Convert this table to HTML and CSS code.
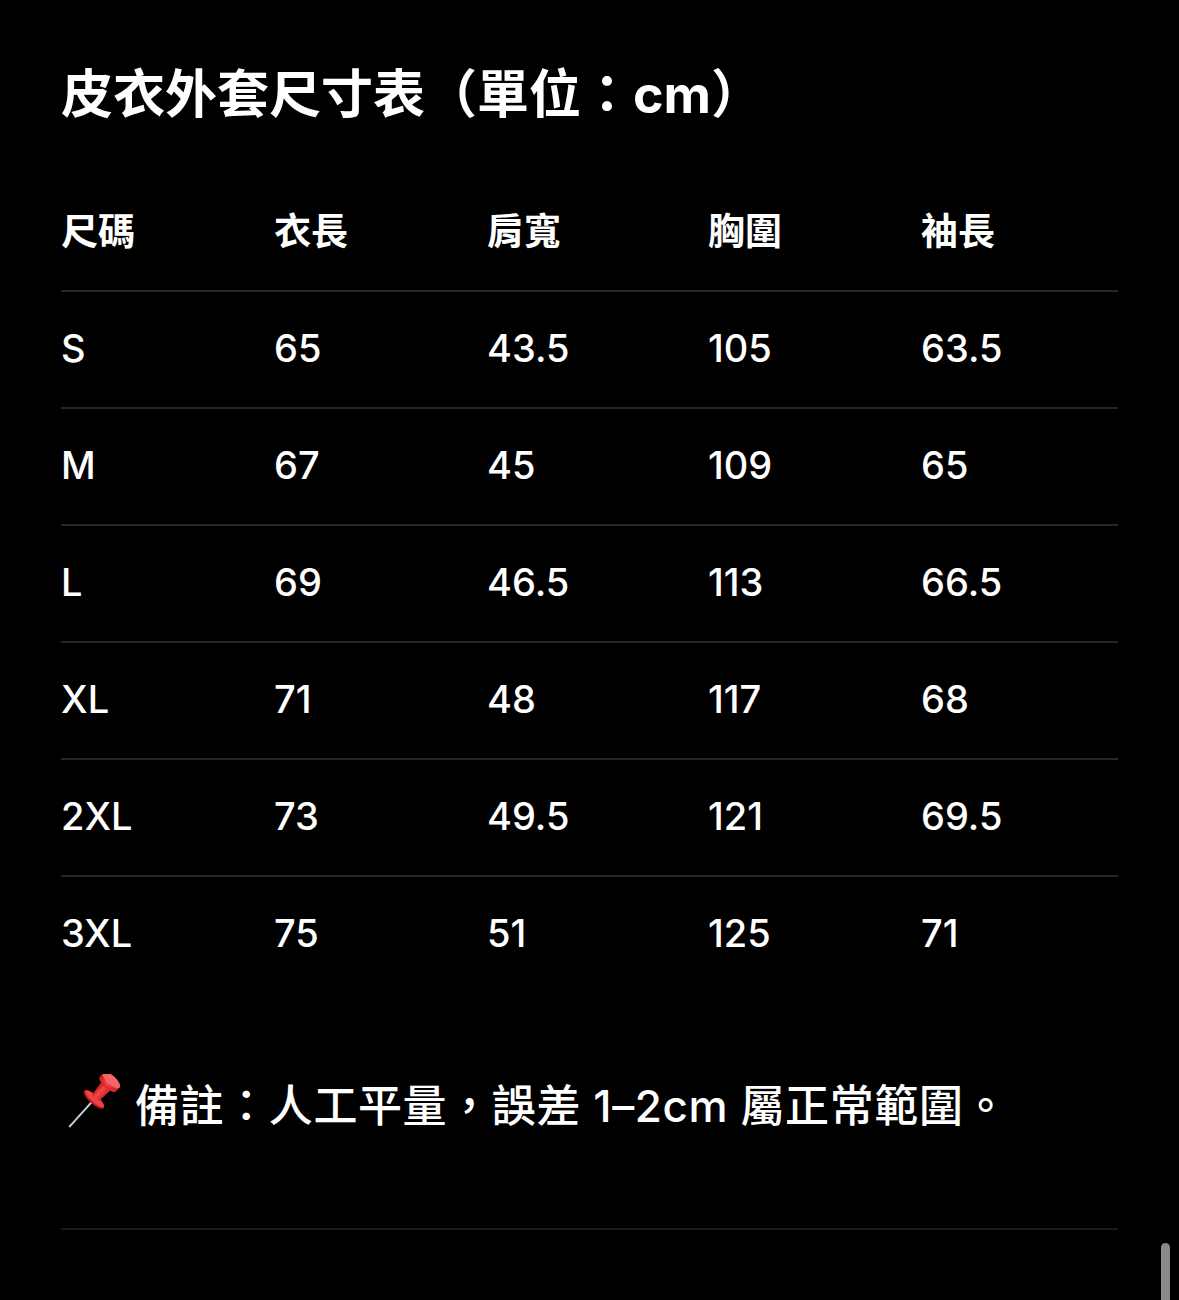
FILE: index.html
```html
<!DOCTYPE html>
<html lang="zh-Hant">
<head>
<meta charset="utf-8">
<title>皮衣外套尺寸表</title>
<link rel="stylesheet" href="styles.css">
</head>
<body>
<main class="page">
  <h1 class="title">皮衣外套尺寸表（單位：cm）</h1>
  <div class="table">
    <div class="row head">
      <div>尺碼</div><div>衣長</div><div>肩寬</div><div>胸圍</div><div>袖長</div>
    </div>
    <div class="row"><div>S</div><div>65</div><div>43.5</div><div>105</div><div>63.5</div></div>
    <div class="row"><div>M</div><div>67</div><div>45</div><div>109</div><div>65</div></div>
    <div class="row"><div>L</div><div>69</div><div>46.5</div><div>113</div><div>66.5</div></div>
    <div class="row"><div>XL</div><div>71</div><div>48</div><div>117</div><div>68</div></div>
    <div class="row"><div>2XL</div><div>73</div><div>49.5</div><div>121</div><div>69.5</div></div>
    <div class="row"><div>3XL</div><div>75</div><div>51</div><div>125</div><div>71</div></div>
  </div>
  <p class="note">
    <svg class="pin" viewBox="0 0 60 60" width="60" height="60" aria-hidden="true">
      <defs>
        <linearGradient id="red" x1="0" y1="0" x2="1" y2="0">
          <stop offset="0" stop-color="#b8141a"/>
          <stop offset="0.45" stop-color="#f2484a"/>
          <stop offset="1" stop-color="#c81e22"/>
        </linearGradient>
        <linearGradient id="steel" x1="0" y1="0" x2="1" y2="0">
          <stop offset="0" stop-color="#6a7b8c"/>
          <stop offset="0.5" stop-color="#e6eef5"/>
          <stop offset="1" stop-color="#7a8796"/>
        </linearGradient>
      </defs>
      <g transform="translate(37 21) rotate(42)">
        <rect x="-1.1" y="6" width="2.2" height="37" fill="url(#steel)"/>
        <ellipse cx="0" cy="6" rx="13" ry="4.5" fill="#c41c20"/>
        <ellipse cx="0" cy="5" rx="12" ry="3.5" fill="#ee4244"/>
        <path d="M-6.5 -14 L6.5 -14 L4.5 4 L-4.5 4 Z" fill="url(#red)"/>
        <ellipse cx="0" cy="-15" rx="11" ry="4.5" fill="#d8282c"/>
        <path d="M-11 -15 L-11 -20 Q0 -26 11 -20 L11 -15 Q0 -10 -11 -15 Z" fill="url(#red)"/>
        <ellipse cx="0" cy="-20" rx="11" ry="4.5" fill="#f56466"/>
      </g>
    </svg>
    <span>備註：人工平量，誤差 1–2cm 屬正常範圍。</span>
  </p>
  <div class="rule"></div>
</main>
<div class="scrollbar"></div>
</body>
</html>
```

FILE: styles.css
```css
html, body {
  margin: 0;
  padding: 0;
  background: #000;
}

body {
  color: #fff;
  font-family: Inter, "Noto Sans CJK TC", sans-serif;
  height: 1300px;
  overflow: hidden;
}

.page {
  padding: 65px 61px 0 61px;
}

.title {
  margin: 0;
  font-size: 52px;
  line-height: 60px;
  font-weight: 700;
}

.table {
  margin-top: 43px;
  width: 1057px;
}

.row {
  display: grid;
  grid-template-columns: 213px 213px 221px 213px 197px;
  align-items: center;
  box-sizing: border-box;
  height: 117px;
  padding-bottom: 4px;
  border-top: 2px solid #262626;
  font-size: 38px;
  font-weight: 500;
}

.row.head {
  border-top: none;
  height: 122px;
  padding-bottom: 0;
  font-weight: 700;
  font-size: 37px;
}

.note {
  margin: 84px 0 0 0;
  display: flex;
  align-items: center;
  gap: 14px;
  font-size: 44px;
  line-height: 60px;
  font-weight: 500;
  letter-spacing: 0.6px;
}

.pin {
  flex: none;
  margin-top: -4px;
}

.rule {
  margin-top: 92px;
  width: 1057px;
  height: 2px;
  background: #1a1a1a;
}

.scrollbar {
  position: fixed;
  left: 1161px;
  top: 1243px;
  width: 9px;
  height: 80px;
  border-radius: 5px;
  background: #8a8a8a;
}
```
